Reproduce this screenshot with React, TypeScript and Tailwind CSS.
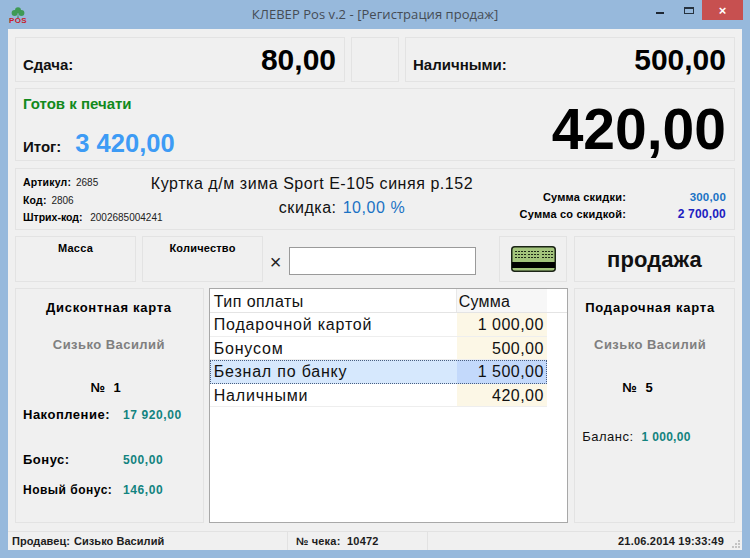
import React from 'react';

const panel = 'border border-[#e3e3e3] bg-[#f0f0f0]';

const payments = [
  { name: 'Подарочной картой', sum: '1 000,00' },
  { name: 'Бонусом', sum: '500,00' },
  { name: 'Безнал по банку', sum: '1 500,00', selected: true },
  { name: 'Наличными', sum: '420,00' },
];

const CloverLogo = () => (
  <div className="flex w-[18px] flex-col items-center">
    <svg width="14" height="11" viewBox="0 0 14 11">
      <circle cx="7" cy="3.2" r="3" fill="#3f9a55" />
      <circle cx="3.6" cy="6" r="3" fill="#3f9a55" />
      <circle cx="10.4" cy="6" r="3" fill="#3f9a55" />
      <path d="M7 6L7.6 11H6.4Z" fill="#2f7f45" />
    </svg>
    <span className="text-[8px] leading-[6px] font-bold tracking-[0.4px] text-[#c8202a]">POS</span>
  </div>
);

const CardIcon = () => (
  <svg width="45" height="26" viewBox="0 0 45 26">
    <rect x="0.75" y="0.75" width="43.5" height="24.5" rx="3" fill="#a3c47c" stroke="#1b2416" strokeWidth="1.5" />
    <rect x="1" y="16" width="43" height="6" fill="#000" />
    <g stroke="#1f2a18" strokeWidth="1" strokeDasharray="2 1">
      <path d="M4 5.5H15M17 5.5H29M31 5.5H42" />
      <path d="M4 8.5H15M17 8.5H29M31 8.5H42" />
      <path d="M4 11.5H15M17 11.5H29M31 11.5H42" />
    </g>
  </svg>
);

const SizeGrip = () => (
  <svg width="10" height="10" viewBox="0 0 10 10" className="absolute right-[1px] bottom-[1px]">
    <g fill="#c4c4c4">
      <rect x="7" y="1" width="2" height="2" />
      <rect x="4" y="4" width="2" height="2" />
      <rect x="7" y="4" width="2" height="2" />
      <rect x="1" y="7" width="2" height="2" />
      <rect x="4" y="7" width="2" height="2" />
      <rect x="7" y="7" width="2" height="2" />
    </g>
  </svg>
);

const App = () => {
  return (
    <div className="flex h-[558px] w-[750px] flex-col overflow-hidden bg-[#97b9dc] font-['Liberation_Sans',sans-serif] text-black">
      {/* title bar */}
      <div className="relative flex h-[29px] shrink-0 items-center justify-center pt-[1px]">
        <div className="absolute top-[7px] left-[9px]">
          <CloverLogo />
        </div>
        <span className="font-['Open_Sans',sans-serif] text-[13px] tracking-[0.05px] text-[#454c55]">КЛЕВЕР Pos v.2 - [Регистрация продаж]</span>
        <div className="absolute top-0 right-[7px] flex items-start">
          <div className="mt-[12px] mr-[20px] h-[2px] w-[8px] bg-[#1d2733]" />
          <div className="mt-[7px] mr-[8px] h-[7px] w-[10px] border border-t-2 border-[#26323f]" />
          <div className="flex h-[20px] w-[41px] items-center justify-center bg-[#c75050] text-[13px] leading-none font-bold text-white">×</div>
        </div>
      </div>

      {/* window body */}
      <div className="mx-[8px] flex h-[521px] shrink-0 flex-col bg-[#f0f0f0]">
        <div className="flex flex-col gap-[6px] px-[7px] pt-[8px]">
          {/* top amounts */}
          <div className="flex h-[45px] gap-[6px]">
            <div className={`${panel} flex w-[330px] items-end justify-between pr-[8px] pb-[6px] pl-[7px]`}>
              <span className="text-[15px] leading-[20px] font-bold text-[#111]">Сдача:</span>
              <span className="-mb-[1px] text-[30px] leading-[32px] font-bold">80,00</span>
            </div>
            <div className={`${panel} w-[48px]`} />
            <div className={`${panel} flex w-[330px] items-end justify-between pr-[8px] pb-[6px] pl-[7px]`}>
              <span className="text-[15px] leading-[20px] font-bold text-[#111]">Наличными:</span>
              <span className="-mb-[1px] text-[30px] leading-[32px] font-bold">500,00</span>
            </div>
          </div>

          {/* total */}
          <div className={`${panel} flex h-[73px] items-start justify-between pr-[8px] pl-[7px]`}>
            <div className="flex flex-col pt-[5px]">
              <span className="text-[15px] leading-[20px] font-bold text-[#118a1c]">Готов к печати</span>
              <div className="mt-[15px] flex items-baseline gap-[14px]">
                <span className="text-[15px] leading-[28px] font-bold text-[#111]">Итог:</span>
                <span className="text-[25.5px] leading-[28px] font-bold text-[#3d9bf5]">3 420,00</span>
              </div>
            </div>
            <span className="mt-[8px] text-[57px] leading-[64px] font-bold">420,00</span>
          </div>

          {/* current item */}
          <div className={`${panel} mt-[1px] flex h-[62px] pt-[5px] pl-[7px]`}>
            <div className="flex w-[128px] shrink-0 flex-col text-[10px] leading-[16.5px] whitespace-nowrap text-[#222]">
              <div><b className="text-[10.5px] tracking-[0.2px] text-black">Артикул:</b> <span className="ml-[2px]">2685</span></div>
              <div><b className="text-[10.5px] tracking-[0.2px] text-black">Код:</b> <span className="ml-[2px]">2806</span></div>
              <div><b className="text-[10.5px] text-black">Штрих-код:</b> <span className="ml-[5px]">2002685004241</span></div>
            </div>
            <div className="flex w-[322px] shrink-0 flex-col items-center">
              <span className="text-[16px] leading-[20px] tracking-[0.55px] whitespace-nowrap text-[#111]">Куртка д/м зима Sport E-105 синяя р.152</span>
              <div className="mt-[4px] ml-[60px] flex items-baseline gap-[6px] text-[16px] leading-[20px]">
                <span className="tracking-[0.55px] text-[#111]">скидка:</span>
                <span className="tracking-[0.55px] text-[#1a72c4]">10,00 %</span>
              </div>
            </div>
            <div className="mt-[15px] flex flex-1 flex-col pr-[8px] text-[11px] leading-[17px] font-bold tracking-[0.2px]">
              <div className="flex">
                <span className="w-[153px] text-right">Сумма скидки:</span>
                <span className="flex-1 text-right text-[11.5px] text-[#1a72c4]">300,00</span>
              </div>
              <div className="flex">
                <span className="w-[153px] text-right">Сумма со скидкой:</span>
                <span className="flex-1 text-right text-[12px] text-[#2020c0]">2 700,00</span>
              </div>
            </div>
          </div>

          {/* input row */}
          <div className="flex h-[46px]">
            <div className={`${panel} w-[121px] pt-[3px] text-center text-[11px] leading-[16px] font-bold tracking-[0.2px]`}>Масса</div>
            <div className={`${panel} ml-[6px] w-[121px] pt-[3px] text-center text-[11px] leading-[16px] font-bold tracking-[0.2px]`}>Количество</div>
            <div className="flex w-[26px] items-center justify-center pt-[6px] pr-[1px] text-[20px] leading-none text-[#222]">×</div>
            <div className="mt-[11px] h-[28px] w-[187px] border border-[#9a9a9a] bg-white" />
            <div className={`${panel} ml-[23px] flex w-[68px] items-center justify-center`}>
              <CardIcon />
            </div>
            <div className={`${panel} ml-[7px] flex flex-1 items-center justify-center pt-[1px] text-[22px] font-bold tracking-[0.1px] text-[#111]`}>продажа</div>
          </div>

          {/* cards and payments */}
          <div className="flex h-[235px] gap-[5px]">
            <div className={`${panel} flex w-[189px] flex-col pt-[11px] pl-[7px] text-[13px] font-bold tracking-[0.5px]`}>
              <div className="pr-[8px] text-center leading-[16px] tracking-[0.7px]">Дисконтная карта</div>
              <div className="mt-[21px] pr-[8px] text-center leading-[16px] tracking-[0.45px] text-[#7f7f7f]">Сизько Василий</div>
              <div className="mt-[27px] pr-[14px] text-center leading-[16px] whitespace-pre">№  1</div>
              <div className="mt-[11px] flex leading-[16px]">
                <span className="w-[100px]">Накопление:</span>
                <span className="text-[12px] tracking-[0.6px] text-[#12837f]">17 920,00</span>
              </div>
              <div className="mt-[29px] flex leading-[16px]">
                <span className="w-[100px]">Бонус:</span>
                <span className="text-[12px] tracking-[0.6px] text-[#12837f]">500,00</span>
              </div>
              <div className="mt-[14px] flex leading-[16px]">
                <span className="w-[100px] text-[12px]">Новый бонус:</span>
                <span className="text-[12px] tracking-[0.6px] text-[#12837f]">146,00</span>
              </div>
            </div>

            <div className="w-[360px] border border-[#a8a8a8] bg-white text-[16px] tracking-[0.8px] text-[#111]">
              <div className="flex h-[24px] border-b border-[#e4e4e4] tracking-[0.45px]">
                <div className="w-[247px] border-r border-[#e8e8e8] pl-[4px] leading-[25px]">Тип оплаты</div>
                <div className="w-[90px] bg-[#f7f7f7] pl-[2px] leading-[25px] tracking-[0.2px]">Сумма</div>
              </div>
              {payments.map((row) => (
                <div key={row.name} className={`flex h-[23.5px] w-[337px] leading-[23px] ${row.selected ? 'outline-1 -outline-offset-1 outline-[#4a5f80] outline-dotted' : 'border-b border-[#eeeeee]'}`}>
                  <div className={`w-[247px] pl-[4px] ${row.selected ? 'bg-[#d6e8fd]' : ''}`}>{row.name}</div>
                  <div className={`w-[90px] pr-[3px] text-right tracking-[0.45px] ${row.selected ? 'bg-[#c3d9fb]' : 'bg-[#fcf7e6]'}`}>{row.sum}</div>
                </div>
              ))}
            </div>

            <div className={`${panel} ml-[1px] flex w-[161px] flex-col pt-[11px] pl-[7px] text-[13px] font-bold tracking-[0.5px]`}>
              <div className="pr-[16px] text-center leading-[16px] tracking-[0.8px]">Подарочная карта</div>
              <div className="mt-[21px] pr-[16px] text-center leading-[16px] tracking-[0.45px] text-[#7f7f7f]">Сизько Василий</div>
              <div className="mt-[27px] pl-[40px] leading-[16px] whitespace-pre">№  5</div>
              <div className="mt-[33px] flex gap-[8px] leading-[16px]">
                <span className="font-normal text-[#111]">Баланс:</span>
                <span className="text-[12px] tracking-[0.3px] text-[#12837f]">1 000,00</span>
              </div>
            </div>
          </div>
        </div>

        {/* status bar */}
        <div className="relative mt-[8px] flex h-[19px] items-center border-t border-[#e2e2e2] text-[11px] font-bold tracking-[0.2px] text-[#1c1c1c]">
          <div className="w-[279px] pl-[4px] tracking-[0.05px]">Продавец: <span className="ml-[1px]">Сизько Василий</span></div>
          <div className="h-full w-[141px] border-x border-[#e2e2e2] pl-[8px] leading-[18px] whitespace-pre">№ чека:  10472</div>
          <div className="flex-1 pr-[18px] text-right">21.06.2014 19:33:49</div>
          <SizeGrip />
        </div>
      </div>
    </div>
  );
};

export default App;
